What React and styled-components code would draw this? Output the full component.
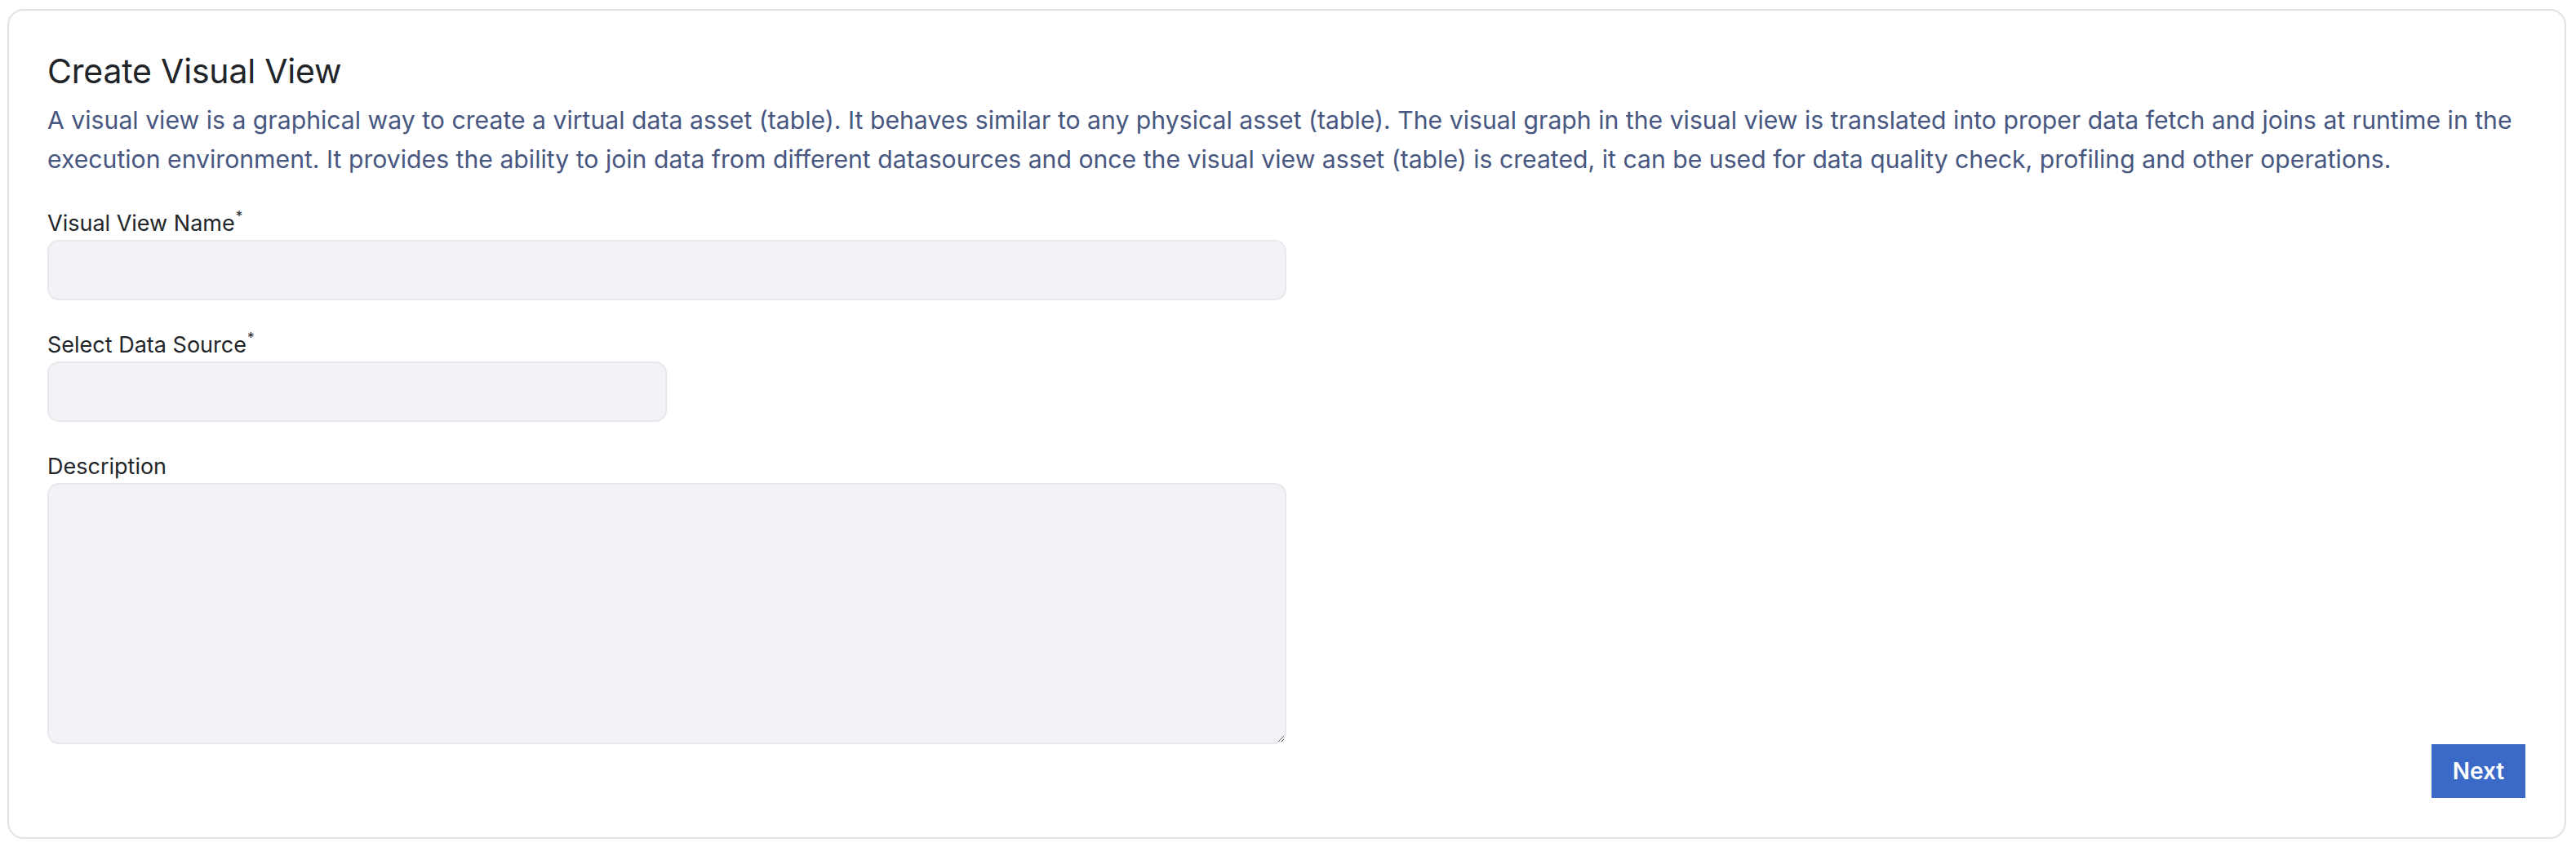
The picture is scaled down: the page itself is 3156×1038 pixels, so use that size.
import React from "react";
import styled, { createGlobalStyle } from "styled-components";

const GlobalStyle = createGlobalStyle`
  html, body {
    margin: 0;
    padding: 0;
    background: #ffffff;
  }
  body {
    font-family: "Inter", "Noto Sans", sans-serif;
    -webkit-font-smoothing: antialiased;
  }
  * { box-sizing: border-box; }
`;

const Card = styled.section`
  margin: 11px 12px 10px 9px;
  border: 2px solid #e1e3e7;
  border-radius: 20px;
  background: #ffffff;
  padding: 46px 48px 48px 47px;
  display: flex;
  flex-direction: column;
`;

const Title = styled.h1`
  margin: 0;
  font-size: 41px;
  line-height: 56px;
  font-weight: 400;
  color: #212529;
  letter-spacing: -0.2px;
`;

const Intro = styled.p`
  margin: 8px 0 0;
  font-size: 30.2px;
  line-height: 48px;
  font-weight: 400;
  color: #48577f;
`;

const Field = styled.div`
  display: flex;
  flex-direction: column;
  align-items: flex-start;
  margin-top: 35px;
`;

const Label = styled.label`
  font-size: 27px;
  line-height: 40px;
  color: #212529;
  font-weight: 400;
`;

const Req = styled.sup`
  font-size: 17px;
  line-height: 0;
  margin-left: 1px;
  position: relative;
  top: -2px;
`;

const inputBase = `
  display: block;
  background: #f2f3f6;
  border: 2px solid #e7e9ed;
  border-radius: 14px;
  font-family: "Inter", sans-serif;
  font-size: 28px;
  color: #212529;
  padding: 0 20px;
  outline: none;
`;

const TextInput = styled.input`
  ${inputBase}
  width: ${(p) => p.$width}px;
  height: 74px;
`;

const SelectBox = styled.select`
  ${inputBase}
  appearance: none;
  -webkit-appearance: none;
  width: ${(p) => p.$width}px;
  height: 74px;
`;

const TextArea = styled.textarea`
  ${inputBase}
  width: 1518px;
  height: 320px;
  padding: 16px 20px;
  resize: both;
`;

const Footer = styled.div`
  display: flex;
  justify-content: flex-end;
`;

const NextButton = styled.button`
  width: 115px;
  height: 66px;
  border: none;
  border-radius: 0;
  background: #3a69c8;
  color: #ffffff;
  font-family: "Inter", sans-serif;
  font-size: 28px;
  font-weight: 600;
  cursor: pointer;
`;

export default function App() {
  return (
    <>
      <GlobalStyle />
      <Card>
        <Title>Create Visual View</Title>
        <Intro>
          A visual view is a graphical way to create a virtual data asset (table). It behaves similar to any physical asset (table). The visual graph in the visual view is translated into proper data fetch and joins at runtime in the execution environment. It provides the ability to join data from different datasources and once the visual view asset (table) is created, it can be used for data quality check, profiling and other operations.
        </Intro>

        <Field>
          <Label htmlFor="vv-name">
            Visual View Name<Req>*</Req>
          </Label>
          <TextInput id="vv-name" $width={1518} />
        </Field>

        <Field>
          <Label htmlFor="vv-source">
            Select Data Source<Req>*</Req>
          </Label>
          <SelectBox id="vv-source" $width={759} defaultValue="">
            <option value="" />
          </SelectBox>
        </Field>

        <Field>
          <Label htmlFor="vv-desc">Description</Label>
          <TextArea id="vv-desc" />
        </Field>

        <Footer>
          <NextButton>Next</NextButton>
        </Footer>
      </Card>
    </>
  );
}
